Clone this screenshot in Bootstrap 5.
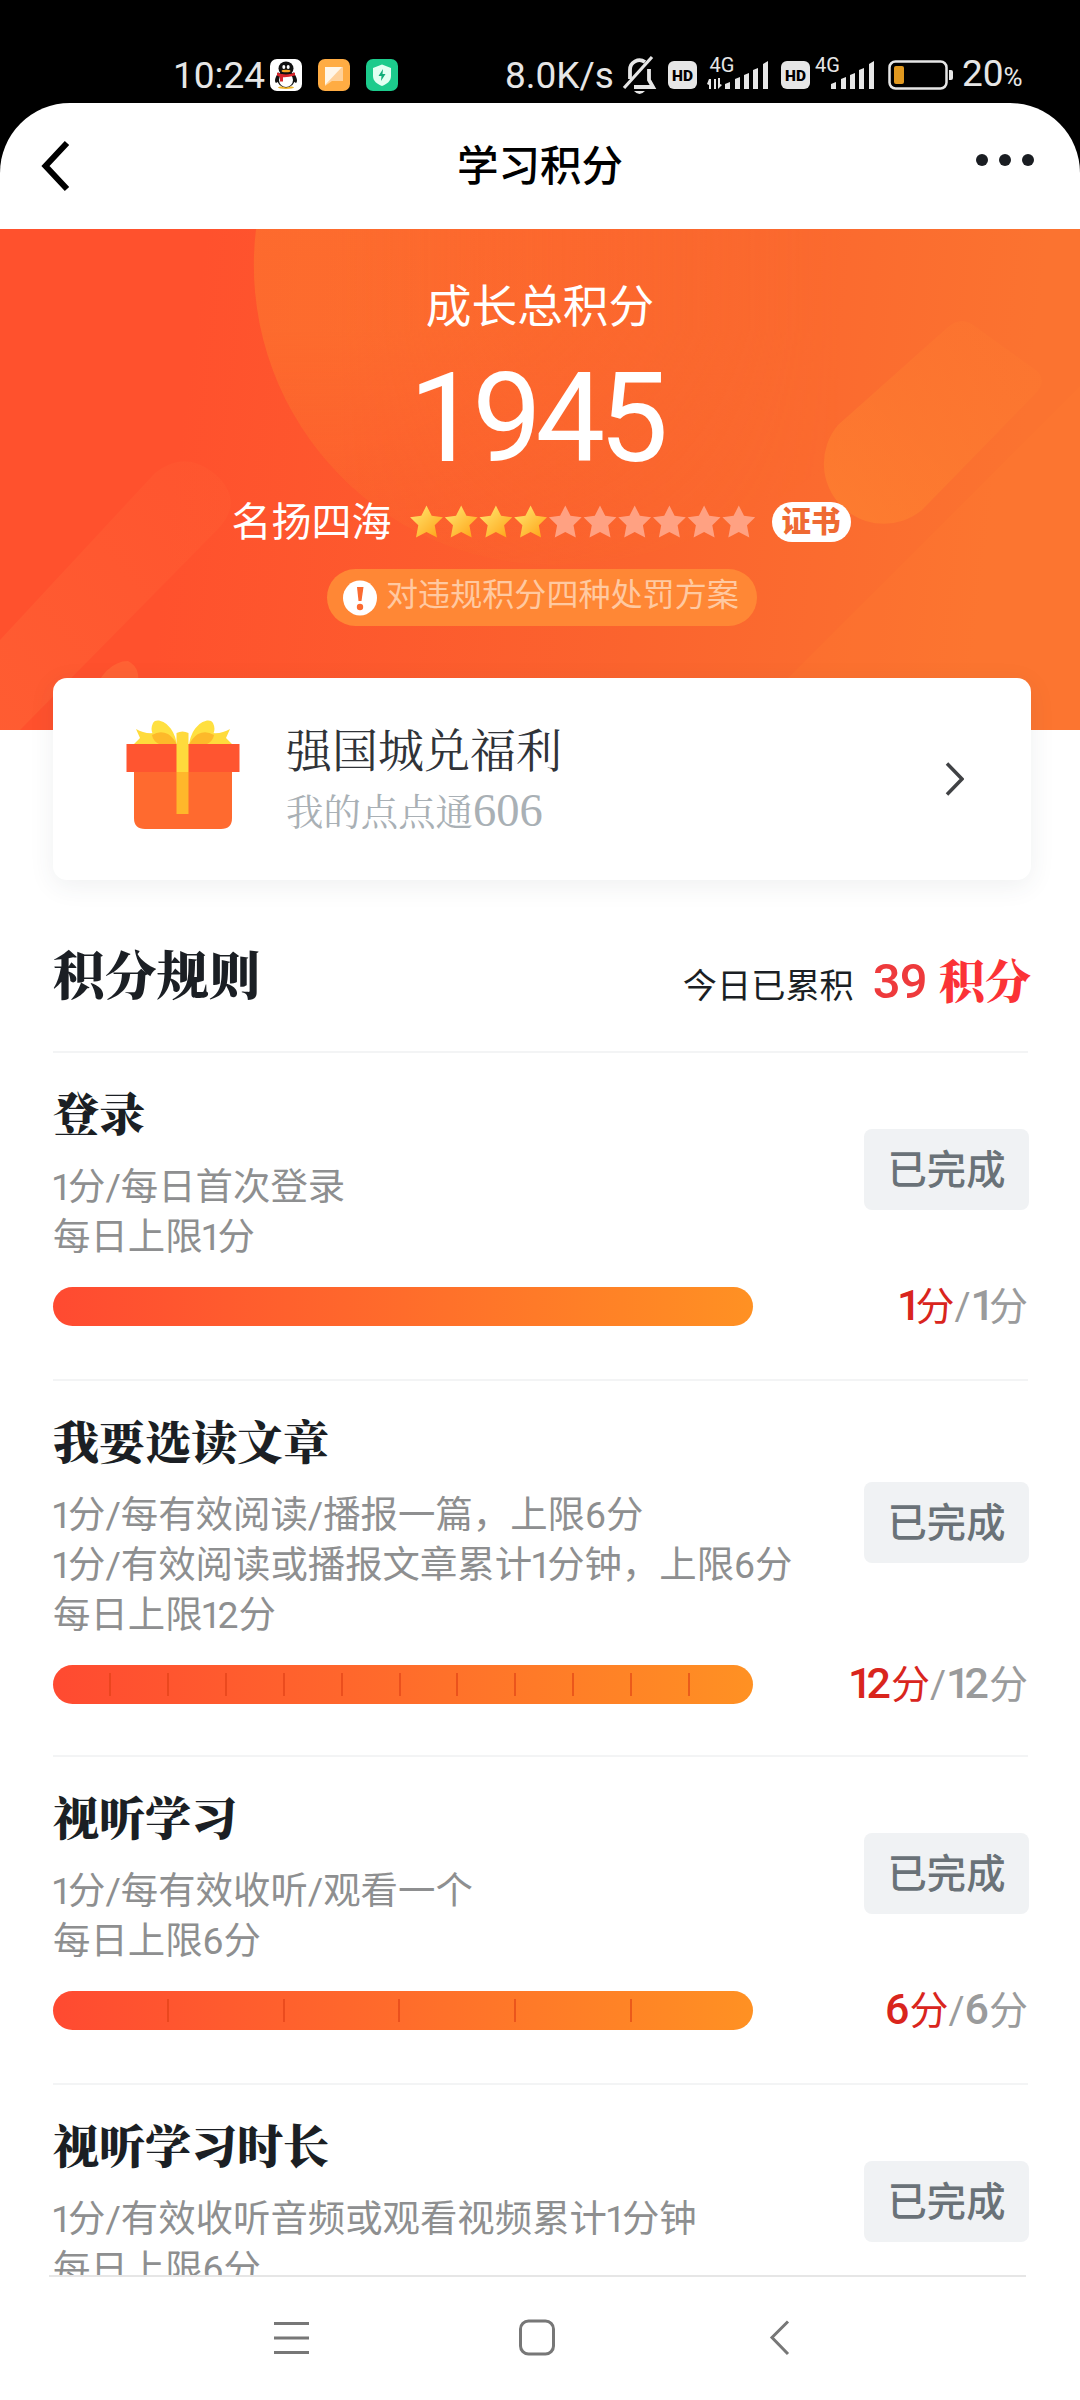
<!DOCTYPE html>
<html lang="zh-CN">
<head>
<meta charset="utf-8">
<meta name="viewport" content="width=device-width, initial-scale=1">
<title>学习积分</title>
<link href="https://cdn.jsdelivr.net/npm/bootstrap@5.3.0/dist/css/bootstrap.min.css" rel="stylesheet">
<style>
  body { width: 1080px; height: 2400px; overflow: hidden; background: #000; font-family: Roboto, "Noto Sans CJK SC", sans-serif; color: #1b1f24; }
  .screen { width: 1080px; height: 2400px; }
  .serif { font-family: "Noto Serif CJK SC", "Noto Sans CJK SC", serif; }

  .status { height: 103px; padding: 46px 0 0 173px; color: #e6e6e6; font-size: 37px; line-height: 58px; }
  .status svg { flex: none; display: block; overflow: visible; }
  .status-text { white-space: nowrap; flex: none; padding-top: 2px; }

  .app { height: 2173px; background: #fff; border-radius: 70px 70px 0 0; overflow: hidden; }
  .topbar { height: 126px; padding: 0 46px 0 40px; }
  .topbar h1 { font-size: 41.5px; line-height: 60px; font-weight: 500; color: #000; margin: 2px 0 0 6px; }
  .topbar .side { width: 140px; }

  .hero { height: 501px; background: linear-gradient(97deg, #ff512d 18%, #fb642e 60%, #fb7330 92%); color: #fff; padding-top: 49px; }
  .hero-art { left: 0; top: 0; }
  .hero-label { font-size: 45.7px; line-height: 60px; }
  .total { font-size: 124px; line-height: 120px; margin-top: 21px; letter-spacing: -6.5px; padding-right: 9px; }
  .rank { height: 44px; margin-top: 22px; font-size: 40px; line-height: 48px; padding-left: 2px; }
  .cert { width: 79px; height: 40px; background: #fff; color: #ef6a33; font-size: 29.5px; line-height: 40px; font-weight: 900; margin-top: -2px; }
  .pill { width: 430px; height: 57px; margin: 24px 0 0 4px; background: #ff8735; color: #ffc9a1; font-size: 32.1px; line-height: 52px; padding-left: 16px; gap: 9px; }
  .pill span { margin-top: -5px; }

  .welfare { margin: -52px 49px 0 53px; height: 202px; border: 0; border-radius: 14px; box-shadow: 0 6px 26px rgba(50,70,80,.08); padding: 0 67px 0 72px; }
  .welfare-title { font-size: 46px; line-height: 60px; color: #303338; margin-top: -1px; }
  .welfare-sub { font-size: 37.4px; line-height: 60px; color: #a9b0b5; margin-top: 3px; }
  .welfare-sub span { font-family: "Liberation Serif", serif; font-size: 46.5px; line-height: 50px; }

  .rules { margin: 0 52px 0 53px; }
  .rules-head { height: 171px; padding-top: 63px; }
  .rules-head h2 { font-size: 51.8px; line-height: 60px; font-weight: 900; margin: 0; color: #1b1f24; }
  .today { font-size: 34.2px; line-height: 60px; padding-top: 5px; white-space: nowrap; margin-right: -3px; }
  .today b { font-size: 46px; color: #fb3236; font-weight: 900; margin-left: 4px; }
  .today i { font-style: normal; font-weight: 500; font-size: 49px; color: #ee3a3c; margin-left: 19px; letter-spacing: -1px; }

  .task { border-top: 2px solid #f3f4f5; padding-top: 28px; height: 328px; }
  .task.tall { height: 376px; }
  .task h3 { font-size: 46px; line-height: 60px; font-weight: 900; margin: 0 0 21px; color: #1b1f24; }
  .task p { font-size: 37.4px; line-height: 50px; color: #8e8f90; margin: 0; white-space: nowrap; }
  .one { letter-spacing: -4px; margin-left: -2px; }
  .done { width: 165px; height: 81px; border: 0; border-radius: 8px; background: #f0f2f4; color: #6a7278; font-size: 39.3px; line-height: 84px; font-weight: 500; padding: 0; margin: -5px -1px 0 0; }
  .meter { width: 700px; height: 39px; border-radius: 20px; background: linear-gradient(90deg, #ff4a31, #ff6c2b 50%, #ff9123); padding: 8px 5px 8px 0; }
  .meter span { flex: 1 1 0; border-right: 2px solid rgba(222,62,20,.6); }
  .meter span:last-child { border-color: transparent; }
  .meter-row { margin-top: 25px; }
  .score { font-size: 39px; line-height: 37px; color: #9a9b9c; white-space: nowrap; }
  .score em { font-style: normal; color: #d9251d; }
  .score b { font-weight: 500; font-size: 43px; }
  .score .thin { letter-spacing: -6px; }

  .sysnav { height: 124px; background: #fff; }
  .sysnav-line { height: 2px; margin: -1px 54px 0 49px; background: #e6e6e6; position: relative; }
</style>
</head>
<body>
<div class="screen d-flex flex-column">

  <div class="status d-flex align-items-center">
    <span class="status-text" style="width:97px">10:24</span>
    <svg width="128" height="34" viewBox="0 0 128 34">
      <rect x="0" y="1" width="32" height="32" rx="7" fill="#fff"/>
      <ellipse cx="16" cy="29.500" rx="8" ry="1.500" fill="#f0b429"/>
      <path d="M9 14C5 19 4 23 6 25l3-2zM23 14c4 5 5 9 3 11l-3-2z" fill="#111"/>
      <ellipse cx="16" cy="21" rx="9" ry="8.500" fill="#111"/>
      <ellipse cx="16" cy="22" rx="7" ry="7" fill="#fff"/>
      <ellipse cx="16" cy="10.500" rx="7.500" ry="7" fill="#111"/>
      <ellipse cx="13.800" cy="9" rx="1.500" ry="2" fill="#fff"/><ellipse cx="18.200" cy="9" rx="1.500" ry="2" fill="#fff"/>
      <ellipse cx="16" cy="13" rx="4.500" ry="1.300" fill="#f5a623"/>
      <path d="M7 14.500q9 4 18 0v3q-7 2-12 1.700v4.300h-3v-4.500l-3-1.500z" fill="#d8262b"/>
      <rect x="48" y="1" width="32" height="32" rx="7" fill="#ffac43"/>
      <path d="M55 9h18v14H62l-7 5z" fill="#ffd199"/><path d="M55 9h17L55 27z" fill="#fff6e8"/>
      <rect x="96" y="1" width="32" height="32" rx="7" fill="#1ccb8c"/>
      <path d="M112 6.500l9 3.500v8c0 5-4 8-9 10-5-2-9-5-9-10v-8z" fill="#e3fff2"/>
      <path d="M113 11l-4.500 7h3l-.5 5 4.500-7h-3z" fill="#12ad79"/>
    </svg>
    <span class="status-text" style="margin-left:107px;width:117px">8.0K/s</span>
    <svg width="36" height="42" viewBox="0 0 36 42" fill="none" stroke="#e6e6e6" stroke-width="3.800">
      <path d="M8 25V16a9.500 9.500 0 0 1 15-8M27 15v11l4 7H12"/><path d="M30 3L2 34" stroke-width="3.200"/>
      <path d="M12 37h11q-5.500 6-11 0z" fill="#e6e6e6" stroke="none"/>
    </svg>
    <svg width="285" height="44" viewBox="0 -2 285 44" style="margin-left:10px" font-family="Roboto, sans-serif" fill="#e6e6e6">
      <rect x="0" y="6" width="29" height="28" rx="6"/>
      <text x="14.500" y="25.500" font-size="15.500" font-weight="900" fill="#000" text-anchor="middle">HD</text>
      <text x="41.500" y="17" font-size="20">4G</text>
      <path d="M43 24v10h-2v-4l-2-1 2-5zM46 24h2v10h-2zM50 23h2v6l2 1-4 4z"/>
      <path d="M57 34v-5l5-2v7zM67 34V24l5-2v12zM76 34V20l5-2v16zM85 34V15l5-2v21zM95 34V9l5-3v28z"/>
      <rect x="113" y="6" width="29" height="28" rx="6"/>
      <text x="127.500" y="25.500" font-size="15.500" font-weight="900" fill="#000" text-anchor="middle">HD</text>
      <text x="147" y="17" font-size="20">4G</text>
      <path d="M163 34v-5l5-2v7zM173 34V24l5-2v12zM182 34V20l5-2v16zM191 34V15l5-2v21zM201 34V9l5-3v28z"/>
      <rect x="221.500" y="6.500" width="57" height="27" rx="6" fill="none" stroke="#e6e6e6" stroke-width="2.500"/>
      <rect x="226" y="11" width="10" height="18" rx="2" fill="#e0981f"/>
      <path d="M281 15h2q2 0 2 2v6q0 2-2 2h-2z"/>
    </svg>
    <span class="status-text" style="margin-left:9px">20<span style="font-size:26px">%</span></span>
  </div>

  <main class="app">
    <header class="topbar d-flex align-items-center justify-content-between">
      <div class="side"><svg width="40" height="56" viewBox="0 0 40 56"><path d="M27 5L5.500 28 27 51" fill="none" stroke="#000" stroke-width="6"/></svg></div>
      <h1>学习积分</h1>
      <div class="side text-end"><svg width="60" height="28" viewBox="0 0 60 28" fill="#1a1d22" style="margin-top:-14px"><circle cx="8" cy="14" r="6"/><circle cx="31" cy="14" r="6"/><circle cx="54" cy="14" r="6"/></svg></div>
    </header>

    <section class="hero position-relative">
      <svg class="hero-art position-absolute" width="1080" height="501" viewBox="0 0 1080 501">
        <defs>
          <linearGradient id="fade" x1="0" y1="0" x2="0" y2="1"><stop offset="0.300" stop-color="#fc7a2e" stop-opacity=".6"/><stop offset="1" stop-color="#fc7a2e" stop-opacity=".12"/></linearGradient>
          <linearGradient id="side" x1="0" y1="0" x2="1" y2="0"><stop offset="0.150" stop-color="#fff"/><stop offset="1" stop-color="#000"/></linearGradient>
          <mask id="discmask"><rect x="250" width="590" height="501" fill="url(#side)"/></mask>
          <linearGradient id="capsule" x1="0" y1="1" x2="1" y2="0"><stop offset="0" stop-color="#ff8a30" stop-opacity=".55"/><stop offset="1" stop-color="#ff8030" stop-opacity=".12"/></linearGradient>
          <linearGradient id="streak" x1="0" y1="1" x2="1" y2="0"><stop offset="0" stop-color="#ff8a45" stop-opacity=".2"/><stop offset="1" stop-color="#ff8a45" stop-opacity=".06"/></linearGradient>
        </defs>
        <path d="M256 0A300 300 0 0 0 554 336Q700 336 850 220V0z" fill="url(#fade)" mask="url(#discmask)"/>
        <path d="M838 196L948 98Q962 86 976 98L1037 142Q1047 152 1036 164L922 281A60 60 0 0 1 838 196z" fill="url(#capsule)"/>
        <path d="M736 501L1080 157V501z" fill="#ff8030" opacity=".22"/>
        <path d="M0 411L155 244Q185 220 215 245Q245 272 218 300L20 501H0z" fill="url(#streak)"/>
        <path d="M90 470Q105 432 128 432Q143 440 136 460L120 480z" fill="#ff8a45" opacity=".3"/>
      </svg>
      <div class="position-relative d-flex flex-column align-items-center">
        <div class="hero-label">成长总积分</div>
        <div class="total">1945</div>
        <div class="rank d-flex align-items-center">
          <span>名扬四海</span>
          <svg width="346" height="34" viewBox="0 0 346 34" style="margin:-2px 16px 0 18px">
            <defs>
              <linearGradient id="gold" x1="0" y1="0" x2="1" y2="1"><stop offset="0.200" stop-color="#ffdc62"/><stop offset="1" stop-color="#ffa012"/></linearGradient>
              <path id="star" d="M16.500 0.500l5.200 10.300 11.200 1.400-8.200 8 2.300 12.300-10.500-5.500-10.500 5.500 2.300-12.300L.1 12.200l11.200-1.400z"/>
            </defs>
            <g fill="url(#gold)"><use href="#star" x="0"/><use href="#star" x="34.700"/><use href="#star" x="69.400"/><use href="#star" x="104.100"/></g>
            <g fill="#ffa182"><use href="#star" x="138.800"/><use href="#star" x="173.500"/><use href="#star" x="208.200"/><use href="#star" x="242.900"/><use href="#star" x="277.600"/><use href="#star" x="312.300"/></g>
          </svg>
          <span class="cert rounded-pill text-center">证书</span>
        </div>
        <div class="pill rounded-pill d-flex align-items-center">
          <svg width="34" height="36" viewBox="0 0 34 36"><ellipse cx="17" cy="18" rx="17" ry="17.500" fill="#fff"/><path d="M14 7h6.500l-2 14h-3z" fill="#fb6a30"/><circle cx="17" cy="27" r="3.200" fill="#fb6a30"/></svg>
          <span>对违规积分四种处罚方案</span>
        </div>
      </div>
    </section>

    <a class="welfare card position-relative flex-row align-items-center text-decoration-none" href="#">
      <svg width="116" height="112" viewBox="0 0 116 112" style="margin-top:-7px">
        <path d="M8 25l7-7-4-9q8 5 18 4l23 11zM108 25l-7-7 4-9q-8 5-18 4L64 24z" fill="#ffdb3c"/>
        <path d="M52 26C50 4 32-4 28 3c-4 8 0 16 14 23zM64 26C66 4 84-4 88 3c4 8 0 16-14 23z" fill="#ffe040"/>
        <path d="M27 15q8-5 16-1 6 4 9 11H36q-8-3-9-10zM89 15q-8-5-16-1-6 4-9 11h16q8-3 9-10z" fill="#fdb92a"/>
        <path d="M9 46h98v52q0 11-11 11H20Q9 109 9 98z" fill="#ff6a2f"/>
        <path d="M1.500 24h113v28H1.500z" fill="#ff5530"/>
        <path d="M51.500 13q6-3 12 0v39h-12z" fill="#ffda3c"/><path d="M51.500 52h12v42h-12z" fill="#ffb72b"/>
      </svg>
      <div class="flex-grow-1" style="margin-left:45px">
        <div class="welfare-title serif">强国城兑福利</div>
        <div class="welfare-sub serif">我的点点通<span>606</span></div>
      </div>
      <svg width="20" height="34" viewBox="0 0 20 34"><path d="M3 1.500L18 17 3 32.500" fill="none" stroke="#404245" stroke-width="3.500"/></svg>
    </a>

    <section class="rules">
      <div class="rules-head d-flex justify-content-between">
        <h2 class="serif">积分规则</h2>
        <div class="today">今日已累积<i>39</i> <b class="serif">积分</b></div>
      </div>

      <article class="task">
        <div class="d-flex justify-content-between align-items-center">
          <div><h3 class="serif">登录</h3><p><span class="one">1</span>分/每日首次登录</p><p>每日上限<span class="one">1</span>分</p></div>
          <button class="btn done">已完成</button>
        </div>
        <div class="meter-row d-flex justify-content-between">
          <div class="meter"></div>
          <div class="score"><em><b class="thin">1</b>分</em>/<b class="thin">1</b>分</div>
        </div>
      </article>

      <article class="task tall">
        <div class="d-flex justify-content-between align-items-center">
          <div><h3 class="serif">我要选读文章</h3><p><span class="one">1</span>分/每有效阅读/播报一篇，上限6分</p><p><span class="one">1</span>分/有效阅读或播报文章累计<span class="one">1</span>分钟，上限6分</p><p>每日上限<span class="one">1</span>2分</p></div>
          <button class="btn done">已完成</button>
        </div>
        <div class="meter-row d-flex justify-content-between">
          <div class="meter d-flex"><span></span><span></span><span></span><span></span><span></span><span></span><span></span><span></span><span></span><span></span><span></span><span></span></div>
          <div class="score"><em><b><span class="thin">1</span>2</b>分</em>/<b><span class="thin">1</span>2</b>分</div>
        </div>
      </article>

      <article class="task">
        <div class="d-flex justify-content-between align-items-center">
          <div><h3 class="serif">视听学习</h3><p><span class="one">1</span>分/每有效收听/观看一个</p><p>每日上限6分</p></div>
          <button class="btn done">已完成</button>
        </div>
        <div class="meter-row d-flex justify-content-between">
          <div class="meter d-flex"><span></span><span></span><span></span><span></span><span></span><span></span></div>
          <div class="score"><em><b>6</b>分</em>/<b>6</b>分</div>
        </div>
      </article>

      <article class="task">
        <div class="d-flex justify-content-between align-items-center">
          <div><h3 class="serif">视听学习时长</h3><p><span class="one">1</span>分/有效收听音频或观看视频累计<span class="one">1</span>分钟</p><p>每日上限6分</p></div>
          <button class="btn done">已完成</button>
        </div>
      </article>
    </section>
  </main>

  <nav class="sysnav">
    <div class="sysnav-line"></div>
    <div class="d-flex" style="padding:41px 0 0 273px">
      <svg width="37" height="40" viewBox="0 0 37 40" stroke="#777" stroke-width="3"><path d="M1 5.500h35M1 20h35M1 34.500h35"/></svg>
      <svg width="40" height="40" viewBox="0 0 40 40" style="margin-left:207px"><rect x="3.500" y="3" width="33" height="33" rx="8" fill="none" stroke="#777" stroke-width="3"/></svg>
      <svg width="24" height="40" viewBox="0 0 24 40" style="margin-left:211px"><path d="M20 3.500L4 19.500 20 36" fill="none" stroke="#777" stroke-width="3"/></svg>
    </div>
  </nav>
</div>
<script src="https://cdn.jsdelivr.net/npm/bootstrap@5.3.0/dist/js/bootstrap.bundle.min.js"></script>
</body>
</html>
